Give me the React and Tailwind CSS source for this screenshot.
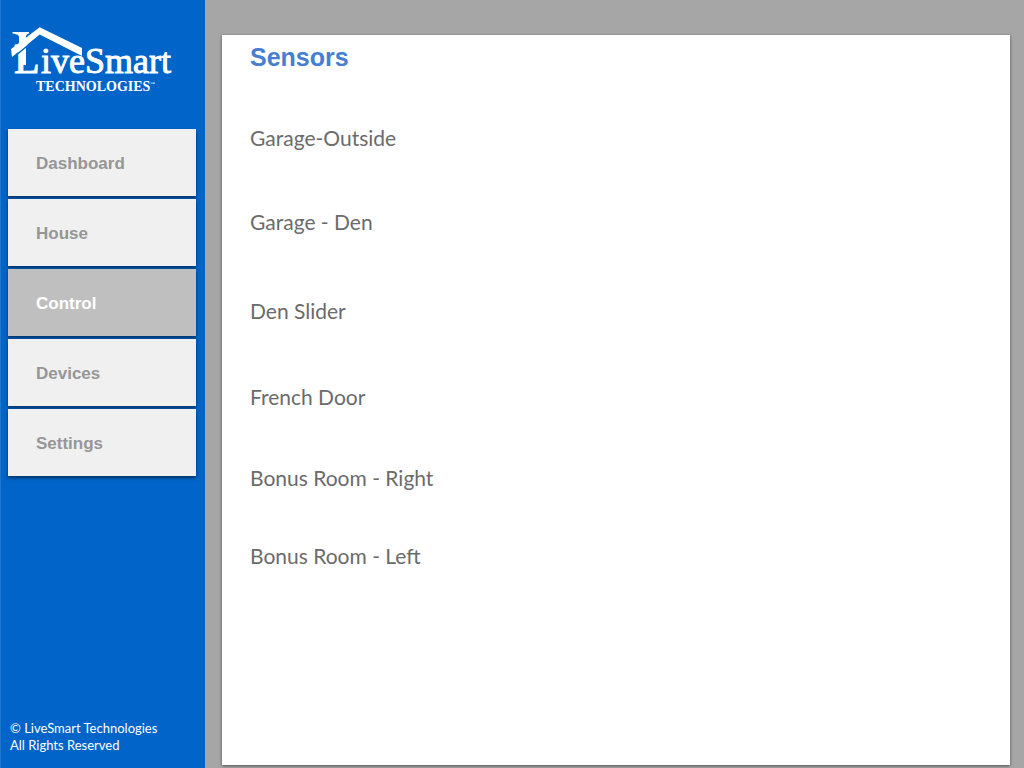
const navItems = ["Dashboard", "House", "Control", "Devices", "Settings"];

const sensors = [
  "Garage-Outside",
  "Garage - Den",
  "Den Slider",
  "French Door",
  "Bonus Room - Right",
  "Bonus Room - Left",
];

function Logo() {
  return (
    <svg
      viewBox="0 0 166 70"
      className="h-[70px] w-[166px] fill-white font-['Liberation_Serif',serif]"
      role="img"
      aria-label="LiveSmart Technologies"
    >
      <path d="M4.500 7H21V8.500Q18 9 18 12V40H11V12Q11 9 4.500 8.500Z" />
      <text x="6" y="48" fontSize="42" stroke="white" strokeWidth="1">L</text>
      <path d="M4 33.500L32 10.500L74 32.500" fill="none" stroke="#0064c8" strokeWidth="1.500" />
      <path d="M3 24L31.700 2.300L74 23V31L31.700 9.500L4 32Z" />
      <text x="33" y="48" fontSize="36" stroke="white" strokeWidth="0.900">iveSmart</text>
      <text x="28" y="66" fontSize="14" fontWeight="bold">TECHNOLOGIES</text>
      <text x="142" y="60" fontSize="5">™</text>
    </svg>
  );
}

export default function App() {
  return (
    <div className="flex min-h-screen bg-[#a6a6a6]">
      <aside className="flex w-[205px] shrink-0 flex-col border-l border-[#2474c8] bg-[#0064c8] pt-[25px] pr-[9px] pb-[14px] pl-[7px]">
        <Logo />
        <nav className="mt-[34px] flex flex-col gap-[3px]">
          {navItems.map((item) => (
            <button
              key={item}
              type="button"
              aria-current={item === "Control" ? "page" : undefined}
              className={
                "h-[67px] pt-[3px] pl-7 text-left font-['Liberation_Sans',sans-serif] text-[17px] font-bold shadow-[0_2px_3px_rgba(0,0,0,0.5)] " +
                (item === "Control" ? "bg-[#bfbfbf] text-white" : "bg-[#f0f0f0] text-[#969696]")
              }
            >
              {item}
            </button>
          ))}
        </nav>
        <footer className="mt-auto pl-[2px] font-[Lato,sans-serif] text-[13px] leading-[17px] text-white">
          <p>© LiveSmart Technologies</p>
          <p>All Rights Reserved</p>
        </footer>
      </aside>
      <main className="flex min-w-0 grow pt-[35px] pr-[14px] pb-[3px] pl-[17px]">
        <section className="grow bg-white px-7 pt-[7px] shadow-[0_1px_3px_rgba(0,0,0,0.5)]">
          <h1 className="font-['Liberation_Sans',sans-serif] text-[25px] leading-[30px] font-bold text-[#467fd2]">
            Sensors
          </h1>
          <ul className="mt-[52px] grid grid-rows-[84px_89px_86px_81px_78px_auto] font-[Lato,sans-serif] text-[21px] leading-[28px] text-[#6b6b6b]">
            {sensors.map((name) => (
              <li key={name}>{name}</li>
            ))}
          </ul>
        </section>
      </main>
    </div>
  );
}
